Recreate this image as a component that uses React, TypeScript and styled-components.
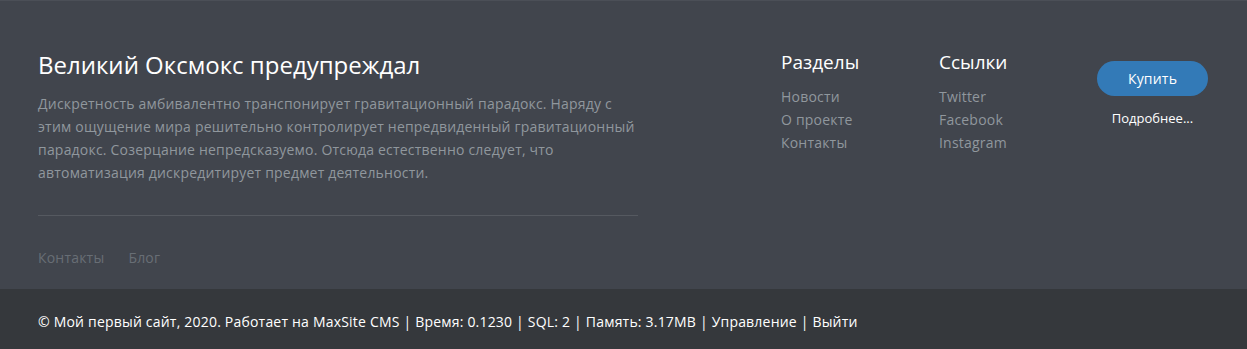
import React from 'react';
import styled, { createGlobalStyle } from 'styled-components';

const GlobalStyle = createGlobalStyle`
  body {
    margin: 0;
    font-family: "Open Sans", "Noto Sans", sans-serif;
    background: #35383c;
  }
`;

const Footer = styled.footer`
  width: 100%;
`;

const Top = styled.div`
  background: #41454d;
  border-top: 1px solid #4b4f57;
  padding: 50px 39px 20px 38px;
  height: 289px;
  box-sizing: border-box;
  display: flex;
`;

const Left = styled.div`
  width: 600px;
  display: flex;
  flex-direction: column;
`;

const Title = styled.h3`
  margin: 0 0 12px;
  font-size: 24px;
  line-height: 1.2;
  font-weight: 400;
  color: #fff;
`;

const Text = styled.p`
  margin: 0;
  font-size: 14px;
  line-height: 23px;
  letter-spacing: 0.2px;
  color: #90979d;
`;

const Divider = styled.hr`
  margin: 31px 0 30px;
  border: none;
  border-top: 1px solid #555960;
  width: 100%;
`;

const BottomNav = styled.nav`
  display: flex;
  gap: 24px;
`;

const BottomLink = styled.a`
  font-size: 14px;
  line-height: 23px;
  letter-spacing: 0.2px;
  color: #686e75;
  text-decoration: none;
`;

const Right = styled.div`
  margin-left: auto;
  display: flex;
`;

const Column = styled.div`
  width: 158px;
  display: flex;
  flex-direction: column;
`;

const ColumnTitle = styled.h4`
  margin: 0 0 11px;
  font-size: 19px;
  line-height: 1.2;
  font-weight: 400;
  color: #fff;
`;

const ColumnLink = styled.a`
  font-size: 14px;
  line-height: 23px;
  letter-spacing: 0.2px;
  color: #90979d;
  text-decoration: none;
`;

const Actions = styled.div`
  width: 111px;
  display: flex;
  flex-direction: column;
  align-items: center;
  padding-top: 10px;
`;

const BuyButton = styled.button`
  width: 111px;
  height: 35px;
  border: none;
  border-radius: 18px;
  background: #337ab7;
  color: #fff;
  font-family: inherit;
  font-size: 14px;
  letter-spacing: 0.2px;
  cursor: pointer;
`;

const More = styled.a`
  margin-top: 12px;
  font-size: 13px;
  line-height: 20px;
  color: #fff;
  text-decoration: none;
  white-space: nowrap;
`;

const Bottom = styled.div`
  background: #35383c;
  height: 60px;
  padding: 0 38px;
  display: flex;
  align-items: center;
  color: #fff;
  font-size: 14px;
  letter-spacing: 0.2px;
`;

const Copy = styled.span`
  padding-top: 4px;
`;

const sections = ['Новости', 'О проекте', 'Контакты'];
const links = ['Twitter', 'Facebook', 'Instagram'];

const App: React.FC = () => {
  return (
    <Footer>
      <GlobalStyle />
      <Top>
        <Left>
          <Title>Великий Оксмокс предупреждал</Title>
          <Text>
            Дискретность амбивалентно транспонирует гравитационный парадокс. Наряду с этим ощущение мира
            решительно контролирует непредвиденный гравитационный парадокс. Созерцание непредсказуемо. Отсюда
            естественно следует, что автоматизация дискредитирует предмет деятельности.
          </Text>
          <Divider />
          <BottomNav>
            <BottomLink href="#">Контакты</BottomLink>
            <BottomLink href="#">Блог</BottomLink>
          </BottomNav>
        </Left>
        <Right>
          <Column>
            <ColumnTitle>Разделы</ColumnTitle>
            {sections.map((s) => (
              <ColumnLink key={s} href="#">{s}</ColumnLink>
            ))}
          </Column>
          <Column>
            <ColumnTitle>Ссылки</ColumnTitle>
            {links.map((s) => (
              <ColumnLink key={s} href="#">{s}</ColumnLink>
            ))}
          </Column>
          <Actions>
            <BuyButton>Купить</BuyButton>
            <More href="#">Подробнее...</More>
          </Actions>
        </Right>
      </Top>
      <Bottom>
        <Copy>
          © Мой первый сайт, 2020. Работает на MaxSite CMS | Время: 0.1230 | SQL: 2 | Память: 3.17MB | Управление | Выйти
        </Copy>
      </Bottom>
    </Footer>
  );
};

export default App;
